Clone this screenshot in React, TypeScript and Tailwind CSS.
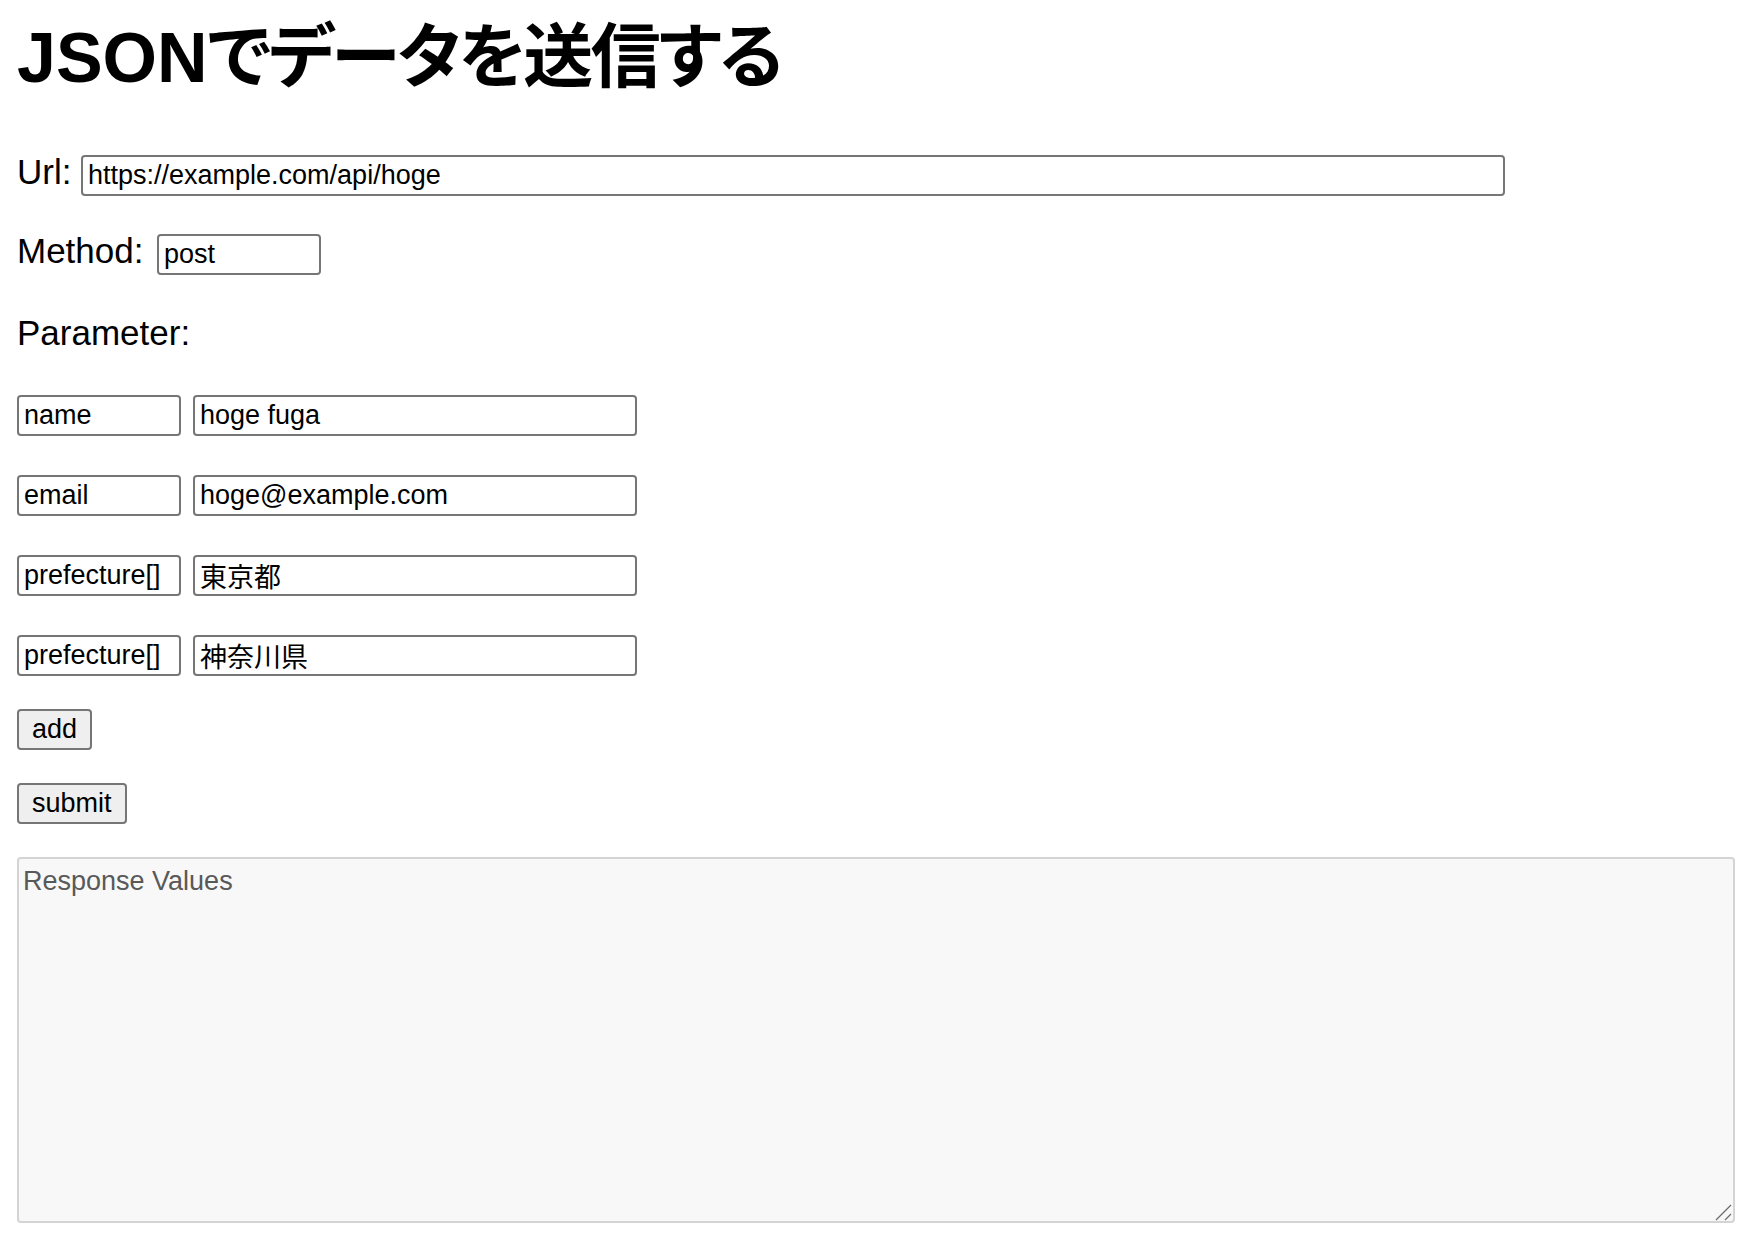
import React from "react";

const inputCls =
  "h-[41px] border-2 border-[#767676] rounded-[4px] bg-white pl-[5px] pr-[4px] text-[27px] leading-[31px] text-black outline-none [font-family:'Liberation_Sans','Noto_Sans_CJK_JP',sans-serif]";

const labelCls =
  "text-[35px] leading-[35px] text-black [font-family:'Liberation_Sans','Noto_Sans_CJK_JP',sans-serif]";

const btnCls =
  "h-[41px] border-2 border-[#767676] rounded-[4px] bg-[#efefef] px-[13px] text-[27px] leading-[31px] text-black [font-family:'Liberation_Sans','Noto_Sans_CJK_JP',sans-serif]";

const params: [string, string][] = [
  ["name", "hoge fuga"],
  ["email", "hoge@example.com"],
  ["prefecture[]", "東京都"],
  ["prefecture[]", "神奈川県"],
];

export default function App() {
  return (
    <div className="min-h-[1242px] bg-white pl-[17px] pt-[18px] [font-family:'Liberation_Sans','Noto_Sans_CJK_JP',sans-serif]">
      <h1 className="text-[70px] leading-[80px] font-bold text-black [font-family:'Liberation_Sans','Noto_Sans_CJK_JP',sans-serif]">
        JSON
        <span className="tracking-[-2.5px] [font-feature-settings:'palt']">でデータを送信する</span>
      </h1>

      <div className="mt-[56px] flex items-baseline">
        <label className={`${labelCls} w-[64px] shrink-0`}>Url:</label>
        <input
          className={`${inputCls} w-[1424px]`}
          defaultValue="https://example.com/api/hoge"
        />
      </div>

      <div className="mt-[37px] flex items-baseline">
        <label className={`${labelCls} w-[140px] shrink-0`}>Method:</label>
        <input className={`${inputCls} w-[164px]`} defaultValue="post" />
      </div>

      <div className={`${labelCls} mt-[40px]`}>Parameter:</div>

      <div className="mt-[45px] flex flex-col gap-[39px]">
        {params.map(([k, v], i) => (
          <div key={i} className="flex gap-[12px]">
            <input className={`${inputCls} w-[164px]`} defaultValue={k} />
            <input className={`${inputCls} w-[444px]`} defaultValue={v} />
          </div>
        ))}
      </div>

      <div className="mt-[33px]">
        <button className={btnCls}>add</button>
      </div>
      <div className="mt-[33px]">
        <button className={btnCls}>submit</button>
      </div>

      <div className="relative mt-[33px] w-[1718px]">
        <textarea
          className="block h-[366px] w-full resize-none rounded-[4px] border-2 border-[#d4d4d4] bg-[#f8f8f8] px-[4px] py-[7px] text-[27px] leading-[31px] text-black outline-none placeholder:text-[#595959] [font-family:'Liberation_Sans','Noto_Sans_CJK_JP',sans-serif]"
          placeholder="Response Values"
        />
        <svg
          className="pointer-events-none absolute bottom-[2px] right-[2px]"
          width="18"
          height="18"
          viewBox="0 0 18 18"
        >
          <line x1="1" y1="17" x2="16" y2="2" stroke="#6b6b6b" strokeWidth="1.3" />
          <line x1="10" y1="17" x2="16" y2="11" stroke="#6b6b6b" strokeWidth="1.3" />
        </svg>
      </div>
    </div>
  );
}
